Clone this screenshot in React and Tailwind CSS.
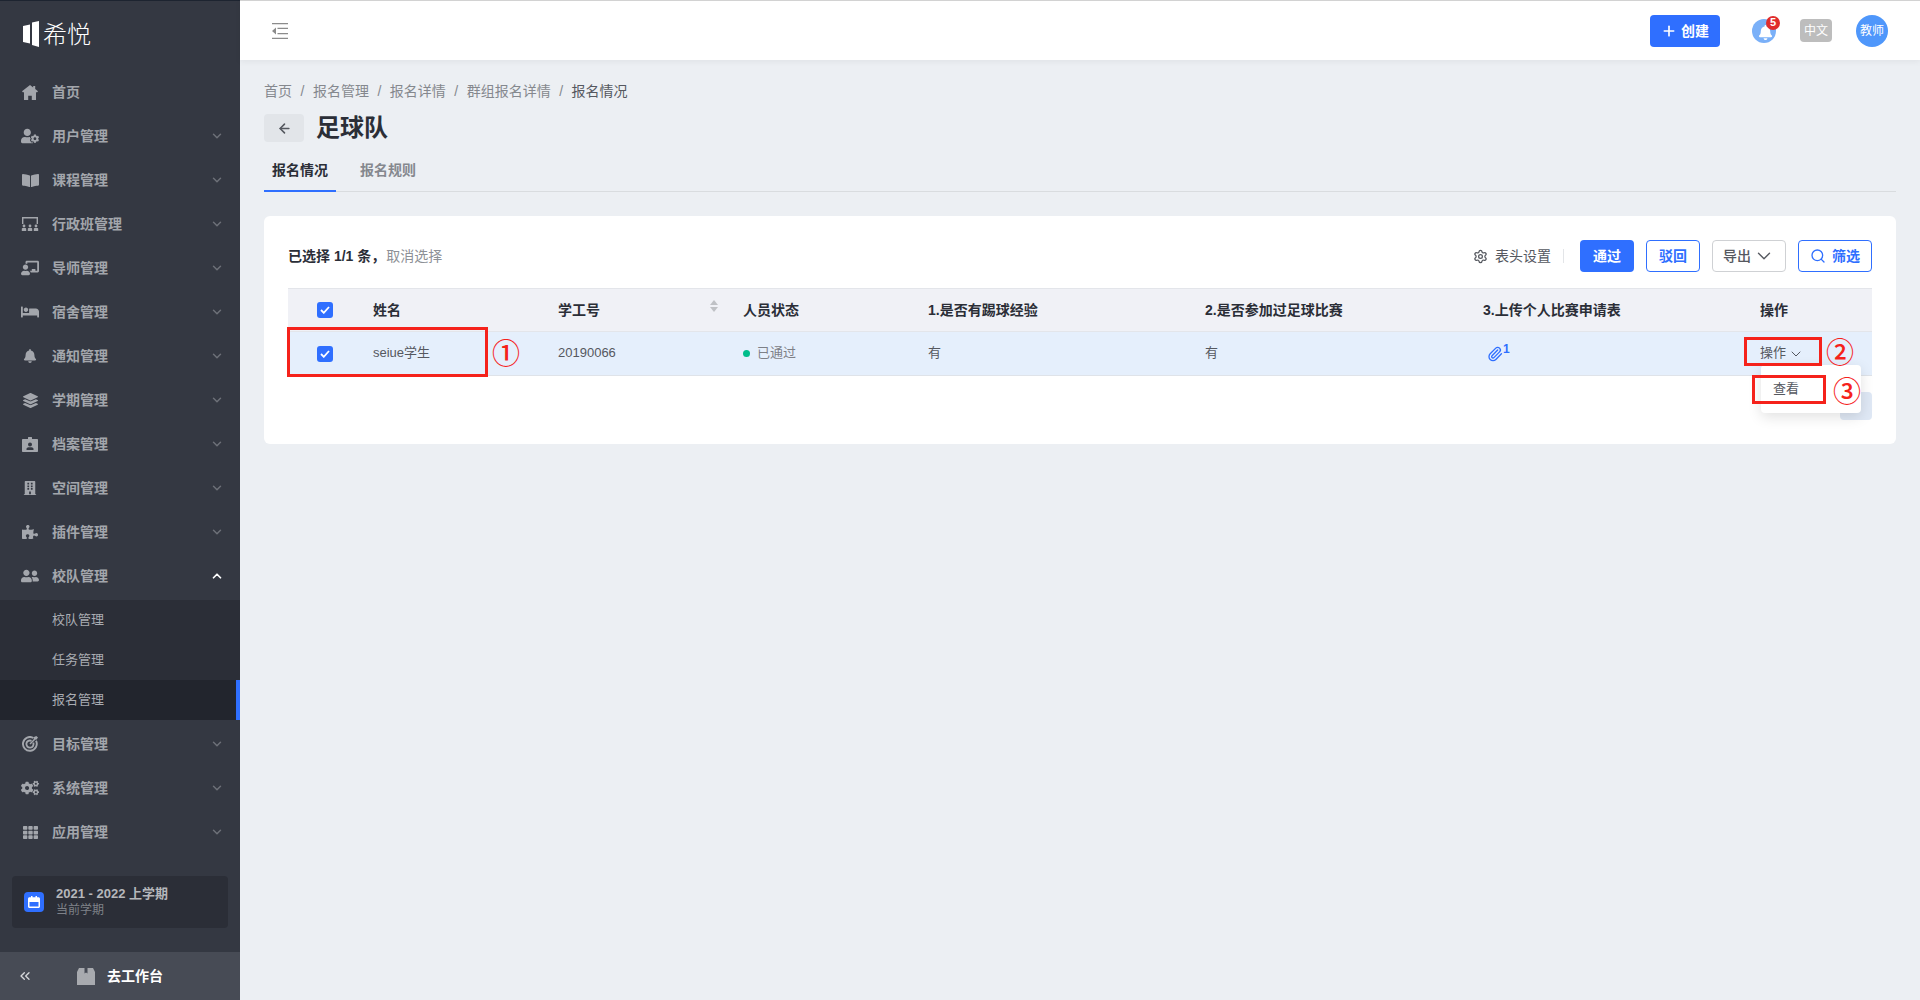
import {
  FaUserCog, FaBookOpen, FaBed, FaBell, FaLayerGroup, FaBuilding,
  FaPuzzlePiece, FaUserFriends, FaCogs, FaTh, FaChalkboardTeacher,
} from 'react-icons/fa'
import { ChevronDown, ChevronUp, ChevronsLeft, ArrowLeft, Plus, Settings, Search, Paperclip } from 'lucide-react'

const HomeIcon = () => (
  <svg width="16" height="15" viewBox="0 0 16 15" fill="currentColor">
    <path d="M8 0l3.200 2.500V1h2v3.100L16 6.300l-.8 1H14V15H9.800v-4.200H6.200V15H2V7.300H.8l-.8-1z" />
  </svg>
)

const ClassIcon = () => (
  <svg width="18" height="16" viewBox="0 0 18 16" fill="currentColor">
    <path d="M1 1h16v7h-1.400V2.400H2.400V8H1z" />
    <circle cx="3" cy="10" r="1.400" /><circle cx="9" cy="10" r="1.400" /><circle cx="15" cy="10" r="1.400" />
    <path d="M.8 15v-2c0-.6.500-1 1-1h2.400c.6 0 1 .4 1 1v2zM6.800 15v-2c0-.6.500-1 1-1h2.400c.6 0 1 .4 1 1v2zM12.800 15v-2c0-.6.500-1 1-1h2.400c.6 0 1 .4 1 1v2z" />
  </svg>
)

const FileIcon = () => (
  <svg width="16" height="15" viewBox="0 0 16 15" fill="currentColor">
    <path fillRule="evenodd" d="M1 2h5V.5C6 .2 6.200 0 6.500 0h3c.3 0 .5.2.5.5V2h5c.6 0 1 .4 1 1v11c0 .6-.4 1-1 1H1c-.6 0-1-.4-1-1V3c0-.6.4-1 1-1zm7 3.500a2 2 0 1 0 0 4 2 2 0 0 0 0-4zM4.500 13h7v-1c0-1-1-1.700-2-1.700h-3c-1 0-2 .7-2 1.700z" />
  </svg>
)

const TargetIcon = () => (
  <svg width="16" height="16" viewBox="0 0 16 16" fill="none" stroke="currentColor" strokeWidth="1.900">
    <path d="M11.500 2A6.900 6.900 0 1 0 14 4.700" />
    <path d="M9.500 4.800A3.600 3.600 0 1 0 11.300 6.700" />
    <path d="M8 8l4.500-4.500" strokeWidth="1.500" />
    <path d="M12 1l-.3 2.900 2.900-.3L16 1.500 14.300 0z" fill="currentColor" stroke="none" />
  </svg>
)

const NAV_TOP = [
  { label: '用户管理', icon: <FaUserCog size={18} /> },
  { label: '课程管理', icon: <FaBookOpen size={17} /> },
  { label: '行政班管理', icon: <ClassIcon /> },
  { label: '导师管理', icon: <FaChalkboardTeacher size={18} /> },
  { label: '宿舍管理', icon: <FaBed size={18} /> },
  { label: '通知管理', icon: <FaBell size={14} /> },
  { label: '学期管理', icon: <FaLayerGroup size={15} /> },
  { label: '档案管理', icon: <FileIcon /> },
  { label: '空间管理', icon: <FaBuilding size={14} /> },
  { label: '插件管理', icon: <FaPuzzlePiece size={16} /> },
]

const NAV_BOTTOM = [
  { label: '目标管理', icon: <TargetIcon /> },
  { label: '系统管理', icon: <FaCogs size={18} /> },
  { label: '应用管理', icon: <FaTh size={15} /> },
]

const CRUMBS = ['首页', '报名管理', '报名详情', '群组报名详情']

function NavRow({ label, icon, open, arrow = true }) {
  return (
    <div className="h-11 flex items-center text-sm font-semibold text-[#a3a6ac]">
      <span className="w-[52px] pl-[12px] pr-[4px] flex justify-center shrink-0">{icon}</span>
      <span>{label}</span>
      {arrow && (open
        ? <ChevronUp size={14} strokeWidth={3} className="ml-auto mr-4 text-white" />
        : <ChevronDown size={14} strokeWidth={2.5} className="ml-auto mr-4 text-[#6d7078]" />)}
    </div>
  )
}

function Sidebar() {
  return (
    <aside className="w-60 shrink-0 flex flex-col bg-[#343842] border-t border-[#1d2430]">
      <div className="h-[69px] flex items-start pl-[23px] pt-[20px] text-white">
        <svg width="16" height="26" viewBox="0 0 16 26" fill="white">
          <path d="M0 5l7-1.500v19L0 21z" />
          <path d="M9 1.500L16 0v26L9 24z" />
        </svg>
        <span className="ml-[4px] text-2xl font-light leading-[28px]">希悦</span>
      </div>
      <nav className="flex-1">
        <NavRow label="首页" icon={<HomeIcon />} arrow={false} />
        {NAV_TOP.map((item) => <NavRow key={item.label} {...item} />)}
        <NavRow label="校队管理" icon={<FaUserFriends size={18} />} open />
        <div className="my-0.5 bg-[#2b2e37] text-[13px] text-[#a9acb2]">
          <div className="h-10 pl-[52px] flex items-center">校队管理</div>
          <div className="h-10 pl-[52px] flex items-center">任务管理</div>
          <div className="h-10 pl-[52px] flex items-center bg-[#22252d] border-r-4 border-[#2f6fff]">报名管理</div>
        </div>
        {NAV_BOTTOM.map((item) => <NavRow key={item.label} {...item} />)}
      </nav>
      <div className="mx-3 mb-6 h-[52px] rounded bg-[#2b2e37] flex items-center pl-3">
        <span className="w-5 h-5 rounded bg-[#2f6fff] flex items-center justify-center">
          <svg width="12" height="12" viewBox="0 0 12 12" fill="white">
            <path fillRule="evenodd" d="M3 0h1.500v1.200h3V0H9v1.200h1.500c.8 0 1.500.7 1.500 1.500v7.800c0 .8-.7 1.500-1.500 1.500h-9C.7 12 0 11.300 0 10.500V2.700c0-.8.7-1.500 1.500-1.500H3zM1.500 6v4.500h9V6z" />
          </svg>
        </span>
        <div className="ml-3 flex flex-col">
          <span className="text-[13px] leading-[17px] font-semibold text-[#b5b7bb]">2021 - 2022 上学期</span>
          <span className="text-xs leading-[17px] text-[#7f8288]">当前学期</span>
        </div>
      </div>
      <div className="h-12 bg-[#474b55] flex items-center text-white">
        <ChevronsLeft size={16} className="ml-[17px] text-[#d5d6d9]" />
        <svg width="18" height="18" viewBox="0 0 18 18" fill="#a8aaaf" className="ml-[44px]">
          <path d="M2 1h5.500v5.500L9 5.500l1.500 1V1H16l2 4v13H0V5z" />
        </svg>
        <span className="ml-3 text-sm font-bold">去工作台</span>
      </div>
    </aside>
  )
}

function Topbar() {
  return (
    <header className="h-[60px] shrink-0 bg-white border-t border-[#d2d2d2] shadow-[0_2px_6px_rgba(0,0,0,0.05)] flex items-center px-8">
      <svg width="16" height="16" viewBox="0 0 16 16" fill="#8c8c8c">
        <path d="M0 0h16v1.300H0zM0 14.700h16V16H0zM5.500 4.800H16v1.300H5.500zM5.500 9.900H16v1.300H5.500zM4 4.500v7L0 8z" />
      </svg>
      <button className="ml-auto w-[70px] h-8 rounded bg-[#2f6fff] text-white text-sm font-semibold flex items-center justify-center gap-1">
        <Plus size={16} strokeWidth={2.5} />创建
      </button>
      <span className="relative ml-[32px] w-6 h-6 rounded-full bg-[#7ab0f8] flex items-center justify-center">
        <FaBell size={15} className="text-white mt-1 ml-0.5" />
        <span className="absolute -top-[3px] -right-1 w-[14px] h-[14px] rounded-full bg-[#e02d2d] text-white text-[11px] font-bold leading-none flex items-center justify-center">5</span>
      </span>
      <span className="ml-6 w-8 h-[23px] rounded bg-[#bdbdbd] text-white text-xs flex items-center justify-center">中文</span>
      <span className="ml-6 w-8 h-8 rounded-full bg-[#4f97fb] text-white text-xs flex items-center justify-center">教师</span>
    </header>
  )
}

function Check() {
  return (
    <span className="w-4 h-4 rounded-[3px] bg-[#2f6fff] flex items-center justify-center">
      <svg width="10" height="8" viewBox="0 0 10 8" fill="none" stroke="white" strokeWidth="1.800">
        <path d="M1 4l2.800 2.800L9 1" />
      </svg>
    </span>
  )
}

function Toolbar() {
  return (
    <div className="h-8 flex items-center text-sm">
      <span className="font-semibold text-[#2b2e37]">已选择 1/1 条，</span>
      <span className="ml-px text-[#8d9096]">取消选择</span>
      <span className="ml-auto flex items-center gap-[7px] text-[#55585f]">
        <Settings size={15} />
        表头设置
      </span>
      <span className="mx-3 w-px h-3.5 bg-[#e3e5e8]" />
      <span className="ml-1 flex items-center gap-3 font-medium">
        <button className="w-[54px] h-8 rounded bg-[#2f6fff] text-white font-semibold">通过</button>
        <button className="w-[54px] h-8 rounded border border-[#2f6fff] text-[#2f6fff] font-semibold">驳回</button>
        <button className="w-[74px] h-8 rounded border border-[#cfd1d4] text-[#55585f] flex items-center justify-center gap-0.5">
          导出<ChevronDown size={22} strokeWidth={1.500} />
        </button>
        <button className="w-[74px] h-8 rounded border border-[#2f6fff] text-[#2f6fff] font-semibold flex items-center justify-center gap-1.5">
          <Search size={16} />筛选
        </button>
      </span>
    </div>
  )
}

function DataTable() {
  const th = 'text-left font-semibold pl-4 text-[#2b2e37]'
  const td = 'pl-4 text-[13px] text-[#55585f]'
  return (
    <table className="mt-4 w-full table-fixed border-collapse text-sm">
      <thead>
        <tr className="h-[43px] bg-[#f0f1f6] border-y border-[#e3e5ea]">
          <th className="w-[69px] pl-[29px] text-left"><Check /></th>
          <th className={`${th} w-[185px]`}>姓名</th>
          <th className={`${th} w-[185px] relative`}>
            学工号
            <span className="absolute right-[9px] top-[11px] flex flex-col gap-[2px]">
              <span className="w-0 h-0 border-x-4 border-x-transparent border-b-[5px] border-b-[#bfc1c5]" />
              <span className="w-0 h-0 border-x-4 border-x-transparent border-t-[5px] border-t-[#bfc1c5]" />
            </span>
          </th>
          <th className={`${th} w-[185px]`}>人员状态</th>
          <th className={`${th} w-[277px]`}>1.是否有踢球经验</th>
          <th className={`${th} w-[278px]`}>2.是否参加过足球比赛</th>
          <th className={`${th} w-[277px]`}>3.上传个人比赛申请表</th>
          <th className={th}>操作</th>
        </tr>
      </thead>
      <tbody>
        <tr className="h-11 bg-[#e5effc] border-b border-[#dfe3e9]">
          <td className="pl-[29px]"><Check /></td>
          <td className={td}>seiue学生</td>
          <td className={td}>20190066</td>
          <td className={td}>
            <span className="flex items-center gap-[7px] text-[#7d8087]">
              <span className="w-[7px] h-[7px] rounded-full bg-[#00bd8b]" />已通过
            </span>
          </td>
          <td className={td}>有</td>
          <td className={td}>有</td>
          <td className={td}>
            <span className="pl-1 flex items-start text-[#2f6fff]">
              <Paperclip size={16} className="mt-[1px]" />
              <span className="-mt-1 text-xs font-bold leading-4">1</span>
            </span>
          </td>
          <td className={td}>
            <span className="flex items-center gap-0.5">操作<ChevronDown size={16} strokeWidth={1.500} /></span>
          </td>
        </tr>
      </tbody>
    </table>
  )
}

// red marks drawn over the screenshot
function Annotations() {
  const box = 'absolute border-[3px] border-[#f5221b]'
  const mark = "absolute w-7 h-7 text-[28px] font-medium leading-7 text-[#f5221b] font-['Noto_Sans_CJK_SC',sans-serif]"
  return (
    <>
      <div className="absolute right-[35px] top-[149px] w-[100px] h-12 rounded bg-white shadow-[0_4px_14px_rgba(0,0,0,0.12)] text-[13px] text-[#55585f] pl-3 flex items-center">查看</div>
      <div className={`${box} left-[23px] top-[111px] w-[201px] h-[50px]`} />
      <div className={`${box} left-[1480px] top-[121px] w-[78px] h-[29px]`} />
      <div className={`${box} left-[1488px] top-[159px] w-[74px] h-[29px]`} />
      <span className={`${mark} left-[228px] top-[122px]`}>①</span>
      <span className={`${mark} left-[1562px] top-[121px]`}>②</span>
      <span className={`${mark} left-[1569px] top-[160px]`}>③</span>
    </>
  )
}

export default function App() {
  return (
    <div className="h-screen overflow-hidden flex bg-[#eceff3] font-['Liberation_Sans','Noto_Sans_CJK_SC',sans-serif]">
      <Sidebar />
      <div className="flex-1 min-w-0 flex flex-col">
        <Topbar />
        <main className="px-6 pt-5">
          <div className="h-[22px] flex items-center text-sm text-[#85888e]">
            {CRUMBS.map((c) => (
              <span key={c}>{c}<span className="mx-[8.5px]">/</span></span>
            ))}
            <span className="text-[#55585f]">报名情况</span>
          </div>
          <div className="mt-3 h-7 flex items-center gap-3">
            <button className="w-10 h-7 rounded bg-[#e2e5e9] flex items-center justify-center text-[#55585f]">
              <ArrowLeft size={15} strokeWidth={2.5} />
            </button>
            <h1 className="text-2xl font-bold text-[#2b2e37]">足球队</h1>
          </div>
          <div className="mt-2 h-[42px] flex gap-4 border-b border-[#d9dcdf] text-sm">
            <div className="w-[72px] h-[42px] flex items-center justify-center font-semibold text-[#2b2e37] border-b-2 border-[#2f6fff]">报名情况</div>
            <div className="w-[72px] h-10 flex items-center justify-center font-semibold text-[#85888e]">报名规则</div>
          </div>
          <section className="relative mt-6 rounded-md bg-white p-6">
            <Toolbar />
            <DataTable />
            <div className="mt-4 flex justify-end">
              <div className="w-8 h-7 rounded bg-[#dfe8f5]" />
            </div>
            <Annotations />
          </section>
        </main>
      </div>
    </div>
  )
}
